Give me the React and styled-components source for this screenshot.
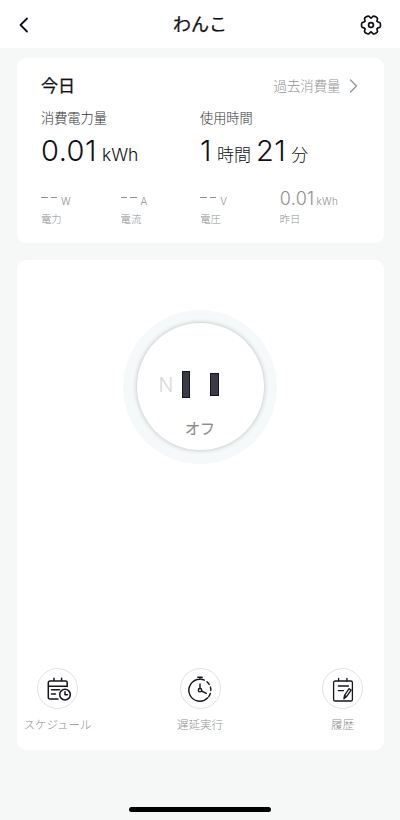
import React from "react";
import styled, { createGlobalStyle, css } from "styled-components";

const GlobalStyle = createGlobalStyle`
  * {
    box-sizing: border-box;
    margin: 0;
    padding: 0;
  }

  body {
    margin: 0;
    background-color: #f6f8f8;
    color: #101018;
    font-family: Inter, "Noto Sans CJK JP", sans-serif;
    -webkit-font-smoothing: antialiased;
  }

  button {
    border: none;
    background: none;
    color: inherit;
    font-family: inherit;
  }

  svg {
    display: block;
    fill: none;
    stroke: currentColor;
    stroke-linecap: round;
    stroke-linejoin: round;
  }
`;

const Screen = styled.div`
  height: 820px;
  display: flex;
  flex-direction: column;
  overflow: hidden;
`;

const Header = styled.header`
  height: 48px;
  padding: 2px 18px 0;
  display: grid;
  grid-template-columns: 22px 1fr 22px;
  align-items: center;
  background-color: #fff;
`;

const Title = styled.h1`
  text-align: center;
  font-size: 18px;
  line-height: 26px;
  font-weight: 400;
  -webkit-text-stroke: 0.25px currentColor;
`;

const Content = styled.main`
  flex: 1;
  display: flex;
  flex-direction: column;
  gap: 17px;
  padding: 10px 16.5px 0;
`;

const Card = styled.section`
  border-radius: 9px;
  background-color: #fff;
`;

const UsageCard = styled(Card)`
  height: 184.5px;
  padding: 15px 0 0 24.5px;
`;

const CardHead = styled.div`
  height: 25px;
  display: flex;
  align-items: center;
  justify-content: space-between;
  padding-right: 26px;

  h2 {
    padding-top: 1px;
    font-size: 17px;
    line-height: 25px;
    font-weight: 400;
    -webkit-text-stroke: 0.25px currentColor;
  }
`;

const HistoryLink = styled.button`
  display: flex;
  align-items: center;
  gap: 8px;
  font-size: 13.4px;
  line-height: 20px;
  font-weight: 300;
  color: #949698;
`;

const Grid = styled.div`
  display: grid;
  grid-template-columns: ${({ cols }) => cols};
`;

const Stat = styled.div`
  padding-top: 10px;
`;

const StatLabel = styled.p`
  font-size: 13.2px;
  line-height: 20px;
  font-weight: 300;
  color: #333338;
`;

const StatValue = styled.p`
  height: 42px;
  padding-top: 3px;
  display: flex;
  align-items: baseline;
  line-height: 40px;
  white-space: nowrap;
`;

const Figure = styled.span`
  font-size: 29px;
  font-weight: 300;
  letter-spacing: 0.5px;
`;

const Unit = styled.span`
  margin: 0 ${({ after = 0 }) => after}px 0 ${({ before = 5 }) => before}px;
  font-size: ${({ size = 17 }) => size}px;
  font-weight: 300;
`;

const Reading = styled.div`
  padding-top: 15px;
  color: #8e9092;
`;

const ReadingValue = styled.p`
  height: 25px;
  display: flex;
  align-items: baseline;
  font-size: 18px;
  line-height: 27px;
  font-weight: 300;
  letter-spacing: 0.3px;
  white-space: nowrap;

  small {
    margin-left: 2px;
    font-size: 10px;
    letter-spacing: 0.3px;

    ${({ empty }) =>
      empty &&
      css`
        margin-left: 4px;
        padding-top: 2.5px;
      `}
  }
`;

const Dashes = styled.span`
  width: 16px;
  height: 1.3px;
  align-self: center;
  display: flex;
  gap: 3px;

  &::before,
  &::after {
    content: "";
    flex: 1;
    background-color: #8e9092;
  }
`;

const ReadingLabel = styled.p`
  padding-top: 1px;
  font-size: 10.3px;
  line-height: 16px;
  font-weight: 300;
`;

const ControlCard = styled(Card)`
  height: 490.5px;
  display: flex;
  flex-direction: column;
  align-items: center;
  justify-content: space-between;
  padding: 50px 0 16.5px;
`;

const Halo = styled.div`
  width: 154px;
  height: 154px;
  padding: 13.5px;
  border-radius: 50%;
  background-color: #f6f9f9;
`;

const Socket = styled.button`
  width: 127px;
  height: 127px;
  display: flex;
  flex-direction: column;
  align-items: center;
  border-radius: 50%;
  background-color: #fff;
  box-shadow: 0 0 5px rgba(0, 0, 0, 0.24);
`;

const Slots = styled.div`
  height: 28px;
  margin-top: 47px;
  display: flex;
  align-items: center;
  align-self: flex-start;
  padding-left: 22px;
`;

const Neutral = styled.span`
  width: 23px;
  padding-top: 2px;
  text-align: left;
  font-size: 19.5px;
  line-height: 28px;
  font-weight: 300;
  color: #d6d8dc;
`;

const Slot = styled.span`
  width: 8.5px;
  height: 27px;
  border: 1px solid #15151f;
  background-color: #393947;

  ${({ short }) =>
    short &&
    css`
      height: 23px;
      margin-left: 20px;
    `}
`;

const SocketState = styled.span`
  margin-top: 20px;
  font-size: 15px;
  line-height: 22px;
  font-weight: 400;
  color: #8c8c8c;
  -webkit-text-stroke: 0.15px currentColor;
`;

const Actions = styled.nav`
  width: 100%;
  display: flex;
  justify-content: space-between;
`;

const Action = styled.button`
  width: 82px;
  display: flex;
  flex-direction: column;
  align-items: center;
  gap: 7.5px;
  font-size: 11.5px;
  line-height: 17px;
  font-weight: 300;
  color: #8e9092;
  white-space: nowrap;
`;

const Round = styled.span`
  width: 41px;
  height: 41px;
  display: flex;
  align-items: center;
  justify-content: center;
  border: 1px solid #e2e2e4;
  border-radius: 50%;
  color: #15151f;
`;

const HomeBar = styled.div`
  width: 142px;
  height: 5px;
  margin: 0 auto 8.5px;
  border-radius: 3px;
  background-color: #000;
`;

const BackIcon = () => (
  <svg width="12" height="18" viewBox="0 0 12 18" strokeWidth="1.8">
    <path d="M9 2.5 2.5 9 9 15.5" />
  </svg>
);

const ChevronIcon = () => (
  <svg width="9" height="14" viewBox="0 0 9 14" strokeWidth="1.3">
    <path d="M1.5 1 7.5 7l-6 6" />
  </svg>
);

const GearIcon = () => (
  <svg width="22" height="22" viewBox="-11 -11 22 22" strokeWidth="1.7">
    {[0, 60, 120, 180, 240, 300].map((angle) => (
      <path
        key={angle}
        transform={`rotate(${angle})`}
        d="M6.2-3.58C6.7-2.7 7.9-2.8 8.7-2.5 9.4-2.1 9.5-1.4 9.5 0S9.4 2.1 8.7 2.5C7.9 2.8 6.7 2.7 6.2 3.58"
      />
    ))}
    <circle r="2.4" />
  </svg>
);

const ScheduleIcon = () => (
  <svg width="26" height="26" viewBox="0 0 26 26" strokeWidth="1.5">
    <path d="M13 23H4.9a1.6 1.6 0 0 1-1.6-1.6V6.6A1.6 1.6 0 0 1 4.9 5h15.7a1.6 1.6 0 0 1 1.6 1.6v4M3.3 10.3h18.9M9 2.2V5M16.6 2.2V5M6.5 13.8h8M6.5 18h4" />
    <circle cx="20" cy="18.6" r="5.3" />
    <path d="M20 15.8v3h2.4" />
  </svg>
);

const TimerIcon = () => (
  <svg width="26" height="26" viewBox="0 0 26 26" strokeWidth="1.4">
    <path d="M13 3.2a11 11 0 1 0 7.8 18.6M10.8 1.2h4.4M13 1.2v2" />
    <path d="M13 3.2a11 11 0 0 1 7.8 18.6" strokeDasharray="3.4 3" strokeDashoffset="-1" />
    <circle cx="13" cy="14.2" r="1.7" />
    <path d="M13 12.5V8M14.6 15l4.8 2.3" />
  </svg>
);

const LogIcon = () => (
  <svg width="24" height="26" viewBox="0 0 24 26" strokeWidth="1.3">
    <rect x="2.6" y="5" width="18.8" height="20" rx="1.6" />
    <path d="M7.6 2.4V5M15.9 2.4V5M7.4 10h10M7.4 14.7h5" />
    <path d="m12.9 22.8.6-3.5 4.6-6.6 2 1.4-4.6 6.5ZM13.5 19.3l2 1.4" />
  </svg>
);

const readings = [
  { label: "電力", unit: "W" },
  { label: "電流", unit: "A" },
  { label: "電圧", unit: "V" },
  { label: "昨日", value: "0.01", unit: "kWh" },
];

const actions = [
  { label: "スケジュール", Icon: ScheduleIcon },
  { label: "遅延実行", Icon: TimerIcon },
  { label: "履歴", Icon: LogIcon },
];

const App = () => {
  return (
    <>
      <GlobalStyle />
      <Screen>
        <Header>
          <button>
            <BackIcon />
          </button>
          <Title>わんこ</Title>
          <button>
            <GearIcon />
          </button>
        </Header>
        <Content>
          <UsageCard>
            <CardHead>
              <h2>今日</h2>
              <HistoryLink>
                過去消費量
                <ChevronIcon />
              </HistoryLink>
            </CardHead>
            <Grid cols="159px 1fr">
              <Stat>
                <StatLabel>消費電力量</StatLabel>
                <StatValue>
                  <Figure>0.01</Figure>
                  <Unit size={17.5}>kWh</Unit>
                </StatValue>
              </Stat>
              <Stat>
                <StatLabel>使用時間</StatLabel>
                <StatValue>
                  <Figure>1</Figure>
                  <Unit after={5}>時間</Unit>
                  <Figure>21</Figure>
                  <Unit>分</Unit>
                </StatValue>
              </Stat>
            </Grid>
            <Grid cols="repeat(4, 79.6px)">
              {readings.map(({ label, value, unit }) => (
                <Reading key={label}>
                  <ReadingValue empty={!value}>
                    {value || <Dashes />}
                    <small>{unit}</small>
                  </ReadingValue>
                  <ReadingLabel>{label}</ReadingLabel>
                </Reading>
              ))}
            </Grid>
          </UsageCard>
          <ControlCard>
            <Halo>
              <Socket>
                <Slots>
                  <Neutral>N</Neutral>
                  <Slot />
                  <Slot short />
                </Slots>
                <SocketState>オフ</SocketState>
              </Socket>
            </Halo>
            <Actions>
              {actions.map(({ label, Icon }) => (
                <Action key={label}>
                  <Round>
                    <Icon />
                  </Round>
                  {label}
                </Action>
              ))}
            </Actions>
          </ControlCard>
        </Content>
        <HomeBar />
      </Screen>
    </>
  );
};

export default App;
